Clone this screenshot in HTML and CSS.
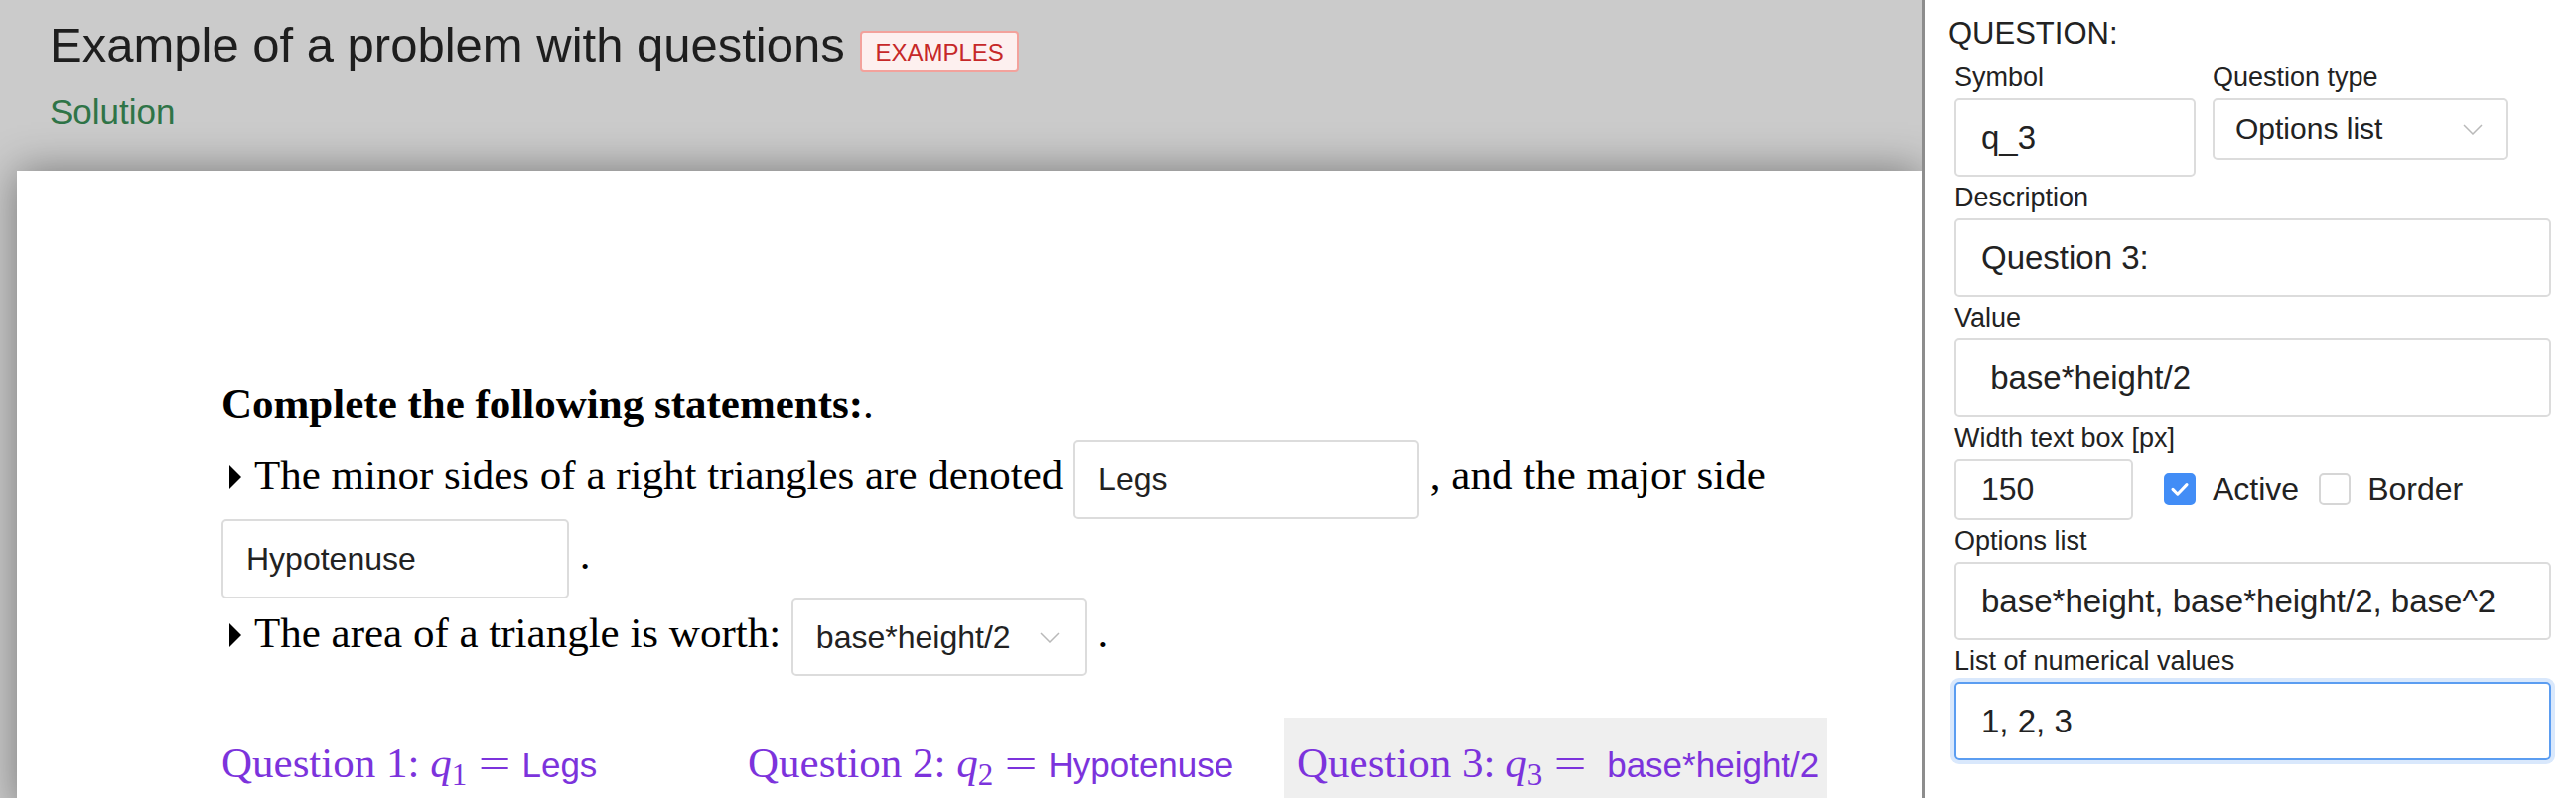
FILE: index.html
```html
<!DOCTYPE html>
<html lang="en">
<head>
<meta charset="utf-8">
<title>Example of a problem with questions</title>
<link rel="stylesheet" href="styles.css">
</head>
<body>
<div class="app">
  <main class="main">
    <header class="head">
      <h1 class="title">Example of a problem with questions <span class="badge">EXAMPLES</span></h1>
      <div class="solution">Solution</div>
    </header>
    <section class="card">
      <div class="problem">
        <p class="lead"><b>Complete the following statements:</b>.</p>
        <p class="stmt"><span class="tri"></span>The minor sides of a right triangles are denoted <span class="blank w-legs">Legs</span> , and the major side <span class="blank w-hyp">Hypotenuse</span> .</p>
        <p class="stmt"><span class="tri"></span>The area of a triangle is worth: <span class="blank pick">base*height/2<svg class="chev" viewBox="0 0 20 11"><polyline points="1,1 10,10 19,1"/></svg></span> .</p>
        <div class="answers">
          <div class="answer a1">Question 1: <span class="math"><i class="mi">q</i><sub>1</sub><span class="mo">=</span></span><span class="val">Legs</span></div>
          <div class="answer a2">Question 2: <span class="math"><i class="mi">q</i><sub>2</sub><span class="mo">=</span></span><span class="val">Hypotenuse</span></div>
          <div class="answer a3 current">Question 3: <span class="math"><i class="mi">q</i><sub>3</sub><span class="mo">=</span></span><span class="val">&nbsp;base*height/2</span></div>
        </div>
      </div>
    </section>
  </main>
  <aside class="panel">
    <h2 class="panel-title">QUESTION:</h2>
    <div class="form">
      <div class="row">
        <div class="col col-symbol">
          <div class="lbl">Symbol</div>
          <div class="box tall">q_3</div>
        </div>
        <div class="col col-type">
          <div class="lbl">Question type</div>
          <div class="box short select">Options list<svg class="chev" viewBox="0 0 20 11"><polyline points="1,1 10,10 19,1"/></svg></div>
        </div>
      </div>
      <div class="lbl">Description</div>
      <div class="box tall">Question 3:</div>
      <div class="lbl">Value</div>
      <div class="box tall">&nbsp;base*height/2</div>
      <div class="lbl">Width text box [px]</div>
      <div class="row checks">
        <div class="box short w-num">150</div>
        <span class="check on"><svg viewBox="0 0 32 32"><polyline points="8,16.5 13.5,22 24,11"/></svg></span>
        <span class="check-text">Active</span>
        <span class="check"></span>
        <span class="check-text">Border</span>
      </div>
      <div class="lbl">Options list</div>
      <div class="box tall">base*height, base*height/2, base^2</div>
      <div class="lbl">List of numerical values</div>
      <div class="box tall focus">1, 2, 3</div>
    </div>
  </aside>
</div>
</body>
</html>
```

FILE: styles.css
```css
* { box-sizing: border-box; }
html, body { margin: 0; padding: 0; }
body {
  background: #cbcbcb;
  font-family: "Liberation Sans", Arial, sans-serif;
  color: #222;
  overflow: hidden;
}
.app { display: flex; width: 2594px; height: 804px; overflow: hidden; }
.main { flex: 1; min-width: 0; display: flex; flex-direction: column; }

.head { padding: 17px 0 0 50px; }
.title {
  margin: 0;
  font-size: 49px;
  line-height: 56px;
  font-weight: 400;
  color: #1e1e1e;
}
.badge {
  display: inline-block;
  margin-left: 2px;
  padding: 7px 13px 5px;
  font-size: 24px;
  line-height: 26px;
  color: #c62828;
  background: #fdf0ef;
  border: 2px solid #f3a29c;
  border-radius: 4px;
  vertical-align: 1px;
}
.solution {
  margin-top: 20px;
  font-size: 35px;
  line-height: 40px;
  color: #2f7447;
}

.card {
  flex: 1;
  margin: 39px 0 0 17px;
  background: #fff;
  box-shadow: 0 0 40px rgba(0, 0, 0, 0.42);
}
.problem {
  padding: 211px 112px 0 206px;
  font-family: "Liberation Serif", "Times New Roman", serif;
  font-size: 43px;
  color: #000;
}
.lead { margin: 0 0 12px; line-height: 48px; }
.stmt { margin: 0; line-height: 48px; }
.tri {
  display: inline-block;
  width: 0;
  height: 0;
  margin: 0 13px 0 8px;
  border-left: 12px solid #000;
  border-top: 12.5px solid transparent;
  border-bottom: 12.5px solid transparent;
}
.blank {
  display: inline-flex;
  align-items: center;
  vertical-align: middle;
  height: 80px;
  padding: 0 23px;
  border: 2px solid #dcdcdc;
  border-radius: 5px;
  font-family: "Liberation Sans", Arial, sans-serif;
  font-size: 32px;
  color: #222;
}
.w-legs { width: 348px; }
.w-hyp { width: 350px; }
.pick { width: 298px; height: 78px; justify-content: space-between; padding-right: 26px; }
.chev { width: 20px; height: 11px; fill: none; stroke: #b9b9b9; stroke-width: 1.5; }

.answers { display: flex; margin-top: 42px; color: #7c33dc; }
.answer { flex: none; padding: 22px 0; line-height: 48px; white-space: nowrap; }
.a1 { width: 530px; }
.a2 { width: 540px; }
.a3 { padding: 22px 8px 22px 13px; }
.current { background: #efefef; }
.math { font-family: "Liberation Serif", "Times New Roman", serif; }
.mi { font-style: italic; }
.math sub { font-size: 0.72em; vertical-align: -0.26em; line-height: 0; }
.mo { display: inline-block; margin: 0 15px 0 16px; transform: scaleX(1.35); }
.val { font-family: "Liberation Sans", Arial, sans-serif; font-size: 35px; }

.panel {
  flex: none;
  width: 659px;
  background: #fff;
  border-left: 3px solid #8d8d8d;
  padding: 16px 25px 0 24px;
}
.panel-title {
  margin: 0 0 5px;
  font-size: 31px;
  line-height: 36px;
  font-weight: 400;
  color: #222;
}
.form { padding-left: 6px; }
.row { display: flex; gap: 17px; }
.col-symbol { width: 243px; }
.col-type { width: 298px; }
.lbl {
  margin: 7px 0 6px;
  font-size: 27px;
  line-height: 29px;
  color: #222;
}
.box {
  display: flex;
  align-items: center;
  padding: 0 25px;
  border: 2px solid #dcdcdc;
  border-radius: 5px;
  font-size: 33px;
  color: #222;
  white-space: nowrap;
}
.tall { height: 79px; }
.short { height: 62px; }
.select { justify-content: space-between; padding: 0 24px 0 21px; font-size: 30px; }
.checks { align-items: center; gap: 0; }
.w-num { width: 180px; font-size: 32px; }
.check {
  display: inline-block;
  width: 32px;
  height: 32px;
  margin-left: 31px;
  border: 2px solid #d6d6d6;
  border-radius: 5px;
  background: #fff;
}
.check + .check-text + .check { margin-left: 20px; }
.check.on { background: #428df6; border-color: #428df6; }
.check svg { display: block; width: 28px; height: 28px; margin: 0; fill: none; stroke: #fff; stroke-width: 3.5; stroke-linecap: round; stroke-linejoin: round; }
.check-text { margin-left: 17px; font-size: 32px; color: #222; }
.focus { border-color: #5b9df1; box-shadow: 0 0 0 4px #d9e8fc; }
```
